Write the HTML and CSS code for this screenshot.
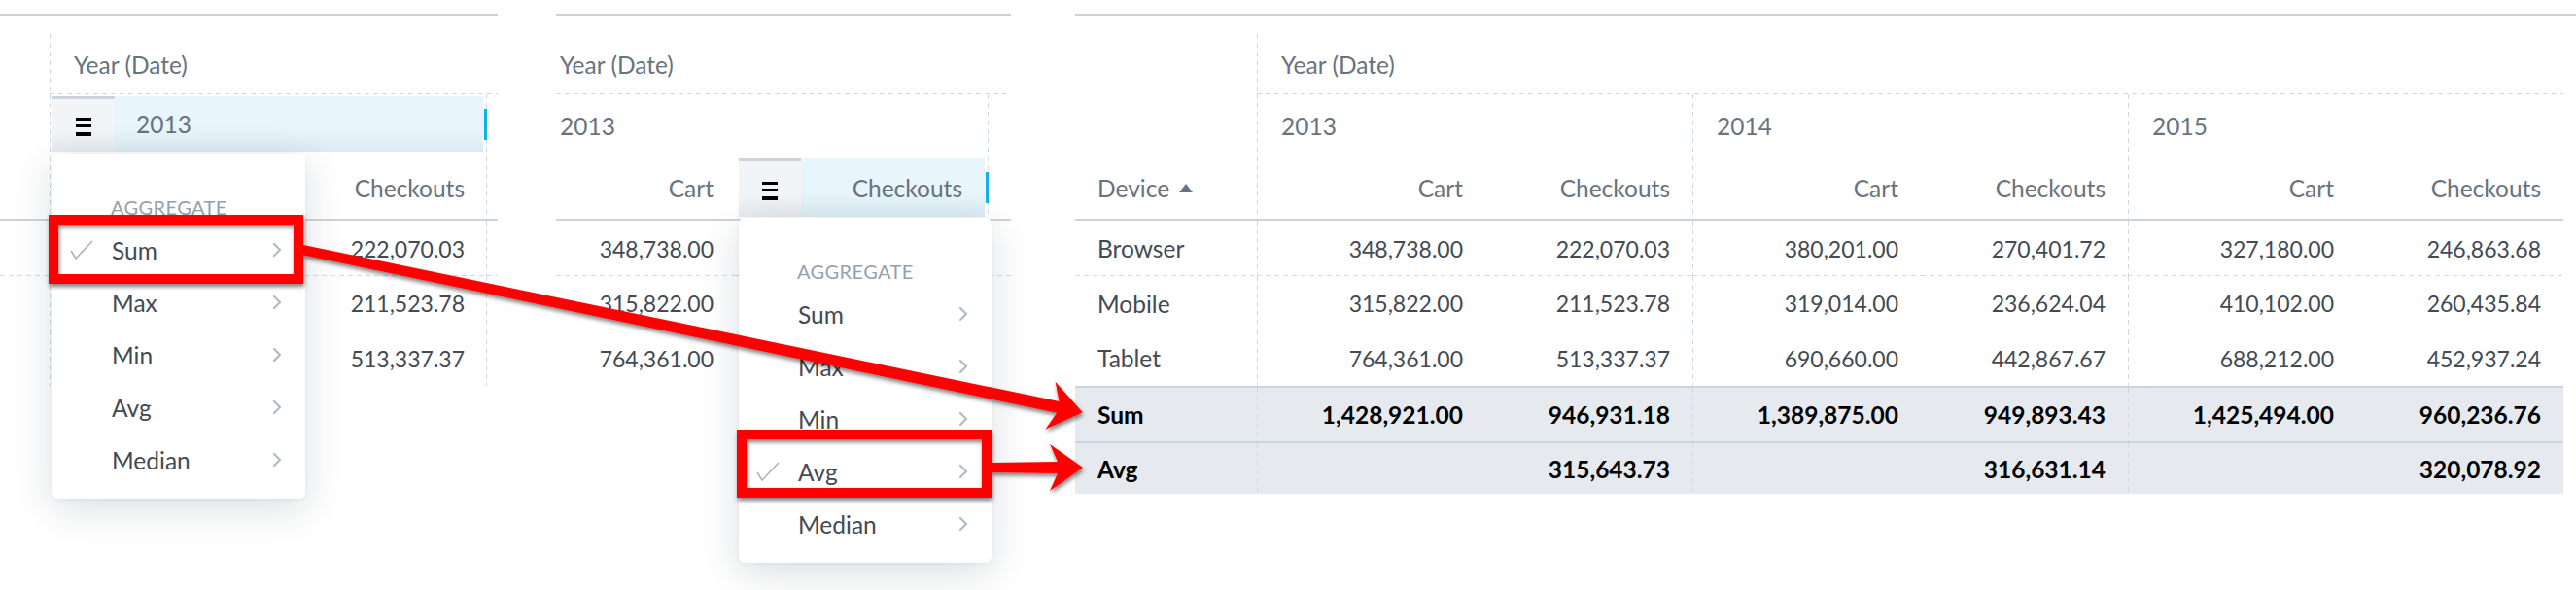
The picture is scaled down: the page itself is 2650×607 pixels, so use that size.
FILE: index.html
```html
<!DOCTYPE html>
<html>
<head>
<meta charset="utf-8">
<link rel="stylesheet" href="styles.css">
</head>
<body>
<div class="stage">
  <section class="panel p1">
    <div class="rule"></div>
    <div class="tbl t1">
      <div class="c"></div><div class="c l b s3 hd pad">Year (Date)</div>

      <div class="c"></div>
      <div class="c l r b s2 hlcell hl-a">
        <div class="hl"><span class="btn"><svg width="16" height="20" viewBox="0 0 16 20"><rect x="0" y="0" width="16" height="3"/><rect x="0" y="7" width="16" height="3"/><rect x="0" y="15" width="16" height="4"/></svg></span><span class="hltxt">2013</span></div>
        <span class="bar"></span>
      </div>
      <div class="c b"></div>

      <div class="c hb"></div><div class="c l hb num hd">Cart</div><div class="c r hb num hd">Checkouts</div><div class="c hb"></div>

      <div class="c b"></div><div class="c l b num">348,738.00</div><div class="c r b num">222,070.03</div><div class="c b"></div>
      <div class="c b"></div><div class="c l b num">315,822.00</div><div class="c r b num">211,523.78</div><div class="c b"></div>
      <div class="c"></div><div class="c l num">764,361.00</div><div class="c r num">513,337.37</div><div class="c"></div>
    </div>

    <div class="menu m1">
      <div class="mlabel">AGGREGATE</div>
      <div class="mitem"><span class="chk"><svg width="24" height="20" viewBox="0 0 24 20"><polyline points="1,11 6,19 23,1"/></svg></span><span class="mtext">Sum</span><svg class="chev" width="10" height="16" viewBox="0 0 10 16"><polyline points="2,2 8,8 2,14"/></svg></div>
      <div class="mitem"><span class="chk"></span><span class="mtext">Max</span><svg class="chev" width="10" height="16" viewBox="0 0 10 16"><polyline points="2,2 8,8 2,14"/></svg></div>
      <div class="mitem"><span class="chk"></span><span class="mtext">Min</span><svg class="chev" width="10" height="16" viewBox="0 0 10 16"><polyline points="2,2 8,8 2,14"/></svg></div>
      <div class="mitem"><span class="chk"></span><span class="mtext">Avg</span><svg class="chev" width="10" height="16" viewBox="0 0 10 16"><polyline points="2,2 8,8 2,14"/></svg></div>
      <div class="mitem"><span class="chk"></span><span class="mtext">Median</span><svg class="chev" width="10" height="16" viewBox="0 0 10 16"><polyline points="2,2 8,8 2,14"/></svg></div>
    </div>
  </section>

  <section class="panel p2">
    <div class="rule"></div>
    <div class="tbl t2">
      <div class="c b s3 hd pad4">Year (Date)</div>

      <div class="c r b s2 hd pad4">2013</div><div class="c b"></div>

      <div class="c hb num hd">Cart</div>
      <div class="c r hb hlcell hl-b">
        <div class="hl"><span class="btn"><svg width="16" height="20" viewBox="0 0 16 20"><rect x="0" y="0" width="16" height="3"/><rect x="0" y="7" width="16" height="3"/><rect x="0" y="15" width="16" height="4"/></svg></span><span class="hltxt right">Checkouts</span></div>
        <span class="bar"></span>
      </div>
      <div class="c hb"></div>

      <div class="c b num">348,738.00</div><div class="c r b num">222,070.03</div><div class="c b"></div>
      <div class="c b num">315,822.00</div><div class="c r b num">211,523.78</div><div class="c b"></div>
      <div class="c num">764,361.00</div><div class="c r num">513,337.37</div><div class="c"></div>
    </div>

    <div class="menu m2">
      <div class="mlabel">AGGREGATE</div>
      <div class="mitem"><span class="chk"></span><span class="mtext">Sum</span><svg class="chev" width="10" height="16" viewBox="0 0 10 16"><polyline points="2,2 8,8 2,14"/></svg></div>
      <div class="mitem"><span class="chk"></span><span class="mtext">Max</span><svg class="chev" width="10" height="16" viewBox="0 0 10 16"><polyline points="2,2 8,8 2,14"/></svg></div>
      <div class="mitem"><span class="chk"></span><span class="mtext">Min</span><svg class="chev" width="10" height="16" viewBox="0 0 10 16"><polyline points="2,2 8,8 2,14"/></svg></div>
      <div class="mitem"><span class="chk"><svg width="24" height="20" viewBox="0 0 24 20"><polyline points="1,11 6,19 23,1"/></svg></span><span class="mtext">Avg</span><svg class="chev" width="10" height="16" viewBox="0 0 10 16"><polyline points="2,2 8,8 2,14"/></svg></div>
      <div class="mitem"><span class="chk"></span><span class="mtext">Median</span><svg class="chev" width="10" height="16" viewBox="0 0 10 16"><polyline points="2,2 8,8 2,14"/></svg></div>
    </div>
  </section>

  <section class="panel p3">
    <div class="rule"></div>
    <div class="tbl t3">
      <div class="c"></div><div class="c l b s6 hd pad">Year (Date)</div>

      <div class="c"></div>
      <div class="c l b s2 hd pad">2013</div>
      <div class="c l b s2 hd pad">2014</div>
      <div class="c l b s2 hd pad">2015</div>

      <div class="c hb hd dev">Device<svg class="sort" width="14" height="9" viewBox="0 0 14 9"><polygon points="0,9 7,0 14,9"/></svg></div>
      <div class="c l hb num hd">Cart</div><div class="c hb num hd">Checkouts</div>
      <div class="c l hb num hd">Cart</div><div class="c hb num hd">Checkouts</div>
      <div class="c l hb num hd">Cart</div><div class="c hb num hd">Checkouts</div>

      <div class="c b dev val">Browser</div>
      <div class="c l b num">348,738.00</div><div class="c b num">222,070.03</div>
      <div class="c l b num">380,201.00</div><div class="c b num">270,401.72</div>
      <div class="c l b num">327,180.00</div><div class="c b num">246,863.68</div>

      <div class="c b dev val">Mobile</div>
      <div class="c l b num">315,822.00</div><div class="c b num">211,523.78</div>
      <div class="c l b num">319,014.00</div><div class="c b num">236,624.04</div>
      <div class="c l b num">410,102.00</div><div class="c b num">260,435.84</div>

      <div class="c dev val">Tablet</div>
      <div class="c l num">764,361.00</div><div class="c num">513,337.37</div>
      <div class="c l num">690,660.00</div><div class="c num">442,867.67</div>
      <div class="c l num">688,212.00</div><div class="c num">452,937.24</div>

      <div class="c tot dev">Sum</div>
      <div class="c l tot num">1,428,921.00</div><div class="c tot num">946,931.18</div>
      <div class="c l tot num">1,389,875.00</div><div class="c tot num">949,893.43</div>
      <div class="c l tot num">1,425,494.00</div><div class="c tot num">960,236.76</div>

      <div class="c tot dev">Avg</div>
      <div class="c l tot num"></div><div class="c tot num">315,643.73</div>
      <div class="c l tot num"></div><div class="c tot num">316,631.14</div>
      <div class="c l tot num"></div><div class="c tot num">320,078.92</div>
    </div>
  </section>

  <svg class="annot" width="2650" height="607" viewBox="0 0 2650 607">
    <defs>
      <filter id="ds" x="-5%" y="-20%" width="110%" height="140%">
        <feDropShadow dx="1" dy="3" stdDeviation="2" flood-color="#000" flood-opacity="0.5"/>
      </filter>
    </defs>
    <g filter="url(#ds)" class="red">
      <rect x="55" y="226" width="252" height="61" class="rbox"/>
      <rect x="763" y="447" width="252" height="60" class="rbox"/>
      <g transform="translate(311 257) rotate(11.76)"><polygon points="0,-5 794,-6 786,-25 820,0 786,25 794,6 0,5"/></g>
      <g transform="translate(1019 481)"><polygon points="0,-5 69,-6 61,-24 95,0 61,24 69,6 0,5"/></g>
    </g>
  </svg>
</div>
</body>
</html>
```

FILE: styles.css
```css
:root {
  --dash: #d1d9e1;
  --solid: #ccd5de;
  --hdr: #69737e;
  --val: #424a53;
  --tot: #e6eaee;
}

html, body {
  margin: 0;
  padding: 0;
  background: #fff;
}

body {
  font-family: "Lato", "Noto Sans", sans-serif;
  font-size: 24.5px;
  color: var(--val);
}

.stage {
  position: relative;
  width: 2650px;
  height: 607px;
  overflow: hidden;
  display: flex;
  align-items: flex-start;
}

.panel {
  position: relative;
}

.p1 { width: 512px; }
.p2 { width: 468px; margin-left: 60px; }
.p3 { flex: 1; margin-left: 66px; }

.rule {
  height: 2px;
  background: #c8d2dd;
  margin-top: 14px;
}

.tbl {
  display: grid;
  margin-top: 19px;
}

.t1 {
  grid-template-columns: 51px 190px 260px 11px;
  grid-template-rows: 62px 64px 66px 57px 56px 57px;
}

.t2 {
  grid-template-columns: 185px 260px 23px;
  grid-template-rows: 62px 64px 66px 57px 56px 57px;
}

.t3 {
  width: 1531px;
  grid-template-columns: 187px 235px 213px 235px 213px 235px 213px;
  grid-template-rows: 62px 64px 66px 57px 56px 57px 57px 54px;
}

.s2 { grid-column: span 2; }
.s3 { grid-column: span 3; }
.s6 { grid-column: span 6; }

.c {
  display: flex;
  align-items: center;
  box-sizing: border-box;
  white-space: nowrap;
  min-width: 0;
  background-image: var(--gb, none), var(--gl, none), var(--gr, none);
  background-repeat: no-repeat;
  background-position: left bottom, left top, right top;
  background-size: 100% 1px, 1px 100%, 1px 100%;
}

.b { --gb: repeating-linear-gradient(90deg, var(--dash) 0 5px, transparent 5px 9px); }
.l { --gl: repeating-linear-gradient(180deg, var(--dash) 0 5px, transparent 5px 9px); }
.r { --gr: repeating-linear-gradient(180deg, var(--dash) 0 5px, transparent 5px 9px); }

.hb { border-bottom: 2px solid var(--solid); }

.num {
  justify-content: flex-end;
  padding-right: 23px;
  font-size: 23px;
  color: var(--val);
}

.val { color: var(--val); }

.hd {
  color: var(--hdr);
  font-size: 24.5px;
}

.pad { padding-left: 25px; }
.pad4 { padding-left: 4px; }
.dev { padding-left: 23px; }

.sort {
  margin-left: 10px;
  fill: var(--hdr);
}

.tot {
  background-color: var(--tot);
  border-top: 2px solid var(--solid);
  font-weight: 700;
  font-size: 24.5px;
  color: #000;
}

/* highlighted header cell with the menu button */
.hlcell {
  align-items: stretch;
  padding-left: 3px;
}
.hl-a { padding-top: 2px; padding-bottom: 5px; }
.hl-b { padding-top: 2px; padding-bottom: 2px; }

.hl {
  flex: 1;
  display: flex;
  align-items: center;
  background: linear-gradient(#e8f5fb 62%, #dbebf3);
}

.btn {
  align-self: stretch;
  width: 64px;
  flex: none;
  box-sizing: border-box;
  border-top: 3px solid #cbd4dd;
  background: linear-gradient(#f2f5f8 60%, #e6ebef);
  display: flex;
  align-items: center;
  justify-content: center;
  padding-top: 4px;
}

.btn svg { fill: #000; }

.hltxt {
  margin-left: 22px;
  color: var(--hdr);
}

.hltxt.right {
  margin-left: auto;
  margin-right: 23px;
}

.bar {
  align-self: center;
  flex: none;
  width: 3px;
  height: 32px;
  margin-left: 1px;
  background: #14b1e7;
}

/* dropdown menus */
.menu {
  position: absolute;
  z-index: 2;
  background: #fff;
  border-radius: 6px;
  box-sizing: border-box;
  padding: 40px 0 13px;
  box-shadow: 0 10px 40px rgba(30, 45, 60, 0.16), 0 1px 4px rgba(30, 45, 60, 0.06);
}

.m1 { left: 54px; top: 158px; width: 260px; }
.m2 { left: 188px; top: 224px; width: 260px; }

.mlabel {
  height: 30px;
  margin-bottom: 2px;
  display: flex;
  align-items: center;
  padding-left: 60px;
  font-size: 20px;
  letter-spacing: 0.4px;
  color: #95a1ad;
}

.mitem {
  height: 54px;
  display: flex;
  align-items: center;
  padding: 0 24px 0 18px;
  color: #424a53;
}

.chk {
  width: 43px;
  flex: none;
  display: flex;
  align-items: center;
}

.chk svg {
  fill: none;
  stroke: #a9b5c1;
  stroke-width: 1.6;
}

.mtext { flex: 1; }

.chev {
  flex: none;
  fill: none;
  stroke: #b1bdc9;
  stroke-width: 2.4;
  stroke-linecap: round;
  stroke-linejoin: round;
}

/* red annotation layer */
.annot {
  position: absolute;
  left: 0;
  top: 0;
  z-index: 3;
  pointer-events: none;
}

.red { fill: #ff0000; }

.rbox {
  fill: none;
  stroke: #ff0000;
  stroke-width: 10;
}
```
